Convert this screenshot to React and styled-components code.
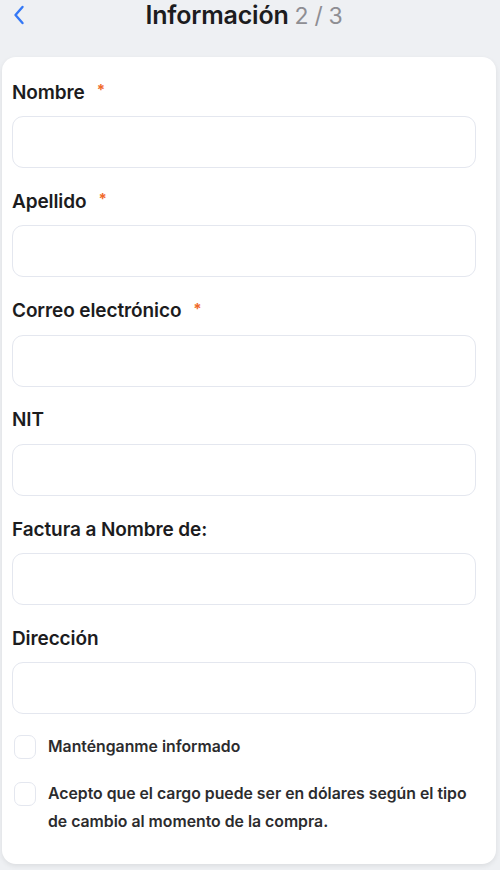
import React from 'react';
import styled, { createGlobalStyle } from 'styled-components';

const GlobalStyle = createGlobalStyle`
    html, body {
        margin: 0;
        padding: 0;
        background: #eef0f3;
        font-family: Inter, 'Liberation Sans', sans-serif;
        color: #1c1c1e;
    }
    * { box-sizing: border-box; }
`

// Header
const Header = styled.div`
    position: relative;
    height: 57px;
    display: flex;
    justify-content: center;
`

const BackButton = styled.button`
    position: absolute;
    left: 8px;
    top: 3px;
    width: 22px;
    height: 24px;
    padding: 0;
    border: none;
    background: none;
    display: flex;
    align-items: center;
    justify-content: center;
    cursor: pointer;
`

const Title = styled.h1`
    margin: 0 0 0 -12px;
    font-size: 25px;
    line-height: 30px;
    font-weight: 600;
    letter-spacing: -0.2px;
    color: #1c1c1e;
`

const Step = styled.span`
    font-size: 23px;
    font-weight: 400;
    color: #8e8e93;
    margin-left: 6px;
    letter-spacing: -0.3px;
`

// Card
const Card = styled.div`
    margin: 0 4px 10px 2px;
    background: #ffffff;
    border-radius: 14px;
    box-shadow: 0 2px 5px rgba(0, 0, 0, 0.08);
    padding: 23px 20px 28px 10px;
`

const Field = styled.div`
    margin-bottom: 21.3px;
    &:last-of-type { margin-bottom: 19px; }
`

const Label = styled.label`
    display: flex;
    align-items: center;
    gap: 12px;
    height: 24px;
    font-size: 19px;
    font-weight: 600;
    letter-spacing: -0.1px;
    color: #1c1c1e;
    margin-bottom: 12px;
`

const Required = styled.span`
    color: #f06a2a;
    font-size: 15px;
    font-weight: 700;
    margin-top: -5px;
`

const Input = styled.input`
    display: block;
    width: 100%;
    height: 52px;
    border: 1.5px solid #e4e7ef;
    border-radius: 11px;
    background: #fff;
    outline: none;
    font-size: 16px;
    padding: 0 14px;
`

const CheckRow = styled.label`
    display: flex;
    align-items: flex-start;
    gap: 12px;
    margin-top: ${props => props.$first ? '0' : '19px'};
    padding-left: 2px;
`

const Box = styled.span`
    flex: none;
    width: 22px;
    height: 24px;
    margin-top: 2px;
    border: 1.5px solid #e4e7ef;
    border-radius: 7px;
    background: #fff;
`

const CheckText = styled.span`
    font-size: 15.8px;
    line-height: 28px;
    font-weight: 600;
    color: #2c2c2e;
`

const fields = [
    { label: 'Nombre', required: true },
    { label: 'Apellido', required: true },
    { label: 'Correo electrónico', required: true },
    { label: 'NIT' },
    { label: 'Factura a Nombre de:' },
    { label: 'Dirección' },
]

export default function App() {
    return (
        <>
            <GlobalStyle />
            <Header>
                <BackButton aria-label="Atrás">
                    <svg width="12" height="20" viewBox="0 0 12 20" fill="none">
                        <path d="M9.5 2 L2.5 10 L9.5 18" stroke="#3478f6" strokeWidth="2.4" strokeLinecap="round" strokeLinejoin="round" />
                    </svg>
                </BackButton>
                <Title>Información<Step>2 / 3</Step></Title>
            </Header>
            <Card>
                {fields.map(f => (
                    <Field key={f.label}>
                        <Label>
                            {f.label}
                            {f.required && <Required>*</Required>}
                        </Label>
                        <Input type="text" />
                    </Field>
                ))}
                <CheckRow $first>
                    <Box />
                    <CheckText>Manténganme informado</CheckText>
                </CheckRow>
                <CheckRow>
                    <Box />
                    <CheckText>Acepto que el cargo puede ser en dólares según el tipo de cambio al momento de la compra.</CheckText>
                </CheckRow>
            </Card>
        </>
    )
}
